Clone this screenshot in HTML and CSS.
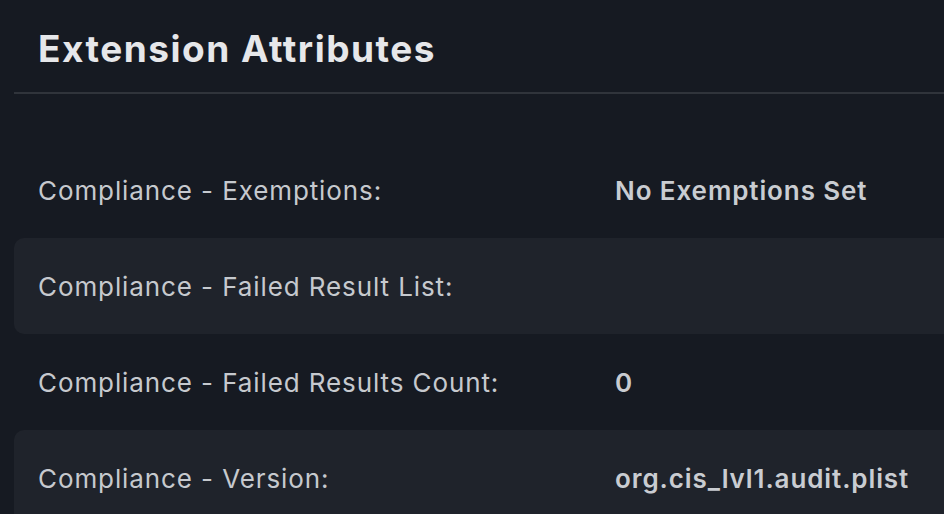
FILE: index.html
```html
<!doctype html>
<html lang="en">
<head>
    <meta charset="UTF-8">
    <meta name="viewport" content="width=device-width, initial-scale=1.0">
    <title>Extension Attributes</title>
    <link rel="stylesheet" href="styles.css">
</head>
<body>
    <div class="panel">
        <div class="panel__header">
            <h2>Extension Attributes</h2>
        </div>
        <ul class="attributes">
            <li>
                <span class="attributes__label">Compliance - Exemptions:</span>
                <span class="attributes__value">No Exemptions Set</span>
            </li>
            <li>
                <span class="attributes__label">Compliance - Failed Result List:</span>
                <span class="attributes__value"></span>
            </li>
            <li>
                <span class="attributes__label">Compliance - Failed Results Count:</span>
                <span class="attributes__value">0</span>
            </li>
            <li>
                <span class="attributes__label">Compliance - Version:</span>
                <span class="attributes__value">org.cis_lvl1.audit.plist</span>
            </li>
        </ul>
    </div>
</body>
</html>
```
FILE: styles.css
```css
*, ::before, ::after {
    padding: 0;
    margin: 0;
    box-sizing: border-box;
    font-family: 'Inter', 'Roboto', sans-serif;
}
html, body {
    height: 100%;
    overflow: hidden;
}
body {
    background: #161a22;
    color: #c9ccd1;
}
.panel {
    padding-left: 14px;
}
.panel__header {
    height: 94px;
    padding: 27px 24px 0;
    border-bottom: 2px solid #30343b;
}
.panel__header h2 {
    font-size: 37px;
    line-height: 44px;
    font-weight: 700;
    color: #e6e7ea;
    letter-spacing: 1.5px;
}
.attributes {
    list-style: none;
    margin-top: 48px;
}
.attributes li {
    height: 96px;
    display: flex;
    align-items: center;
    padding-left: 24px;
    font-size: 26px;
    letter-spacing: 0.9px;
    border-radius: 10px 0 0 10px;
}
.attributes li:nth-child(even) {
    background: #1f232b;
}
.attributes__label {
    width: 577px;
    flex-shrink: 0;
    color: #c6c9ce;
}
.attributes__value {
    font-weight: 600;
    color: #c9ccd1;
}
```
